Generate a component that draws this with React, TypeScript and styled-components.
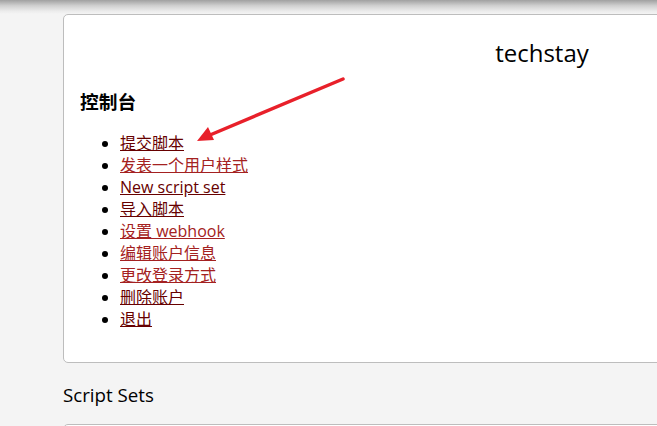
import React from "react";
import styled, { createGlobalStyle } from "styled-components";

const Global = createGlobalStyle`
  html, body { margin: 0; padding: 0; }
  body {
    background: #f4f4f4;
    font-family: "Open Sans", "Noto Sans CJK SC", sans-serif;
    color: #000;
    overflow: hidden;
    width: 657px;
    height: 426px;
  }
`;

const Page = styled.div`
  position: relative;
  width: 657px;
  height: 426px;
  overflow: hidden;
`;

const TopShade = styled.div`
  height: 14px;
  background: linear-gradient(to bottom, #a0a0a0 0%, #cfcfcf 40%, #ececec 80%, #f4f4f4 100%);
`;

const Main = styled.main`
  padding-left: 63px;
  width: 1100px;
`;

const Card = styled.section`
  width: 958px;
  background: #fff;
  border: 1px solid #bdbdbd;
  border-radius: 5px;
  box-sizing: border-box;
  padding: 21px 16px 32px 16px;
`;

const UserName = styled.h2`
  margin: 0;
  text-align: center;
  font-size: 24px;
  font-weight: 400;
  line-height: 33px;
`;

const SectionTitle = styled.h3`
  margin: 20px 0 0 0;
  font-size: 18.72px;
  font-weight: 700;
  line-height: 25px;
`;

const LinkList = styled.ul`
  margin: 18px 0 0 0;
  padding-left: 40px;
  list-style: disc;
`;

const Item = styled.li`
  font-size: 16px;
  line-height: 22px;
`;

const Link = styled.a<{ $visited?: boolean }>`
  color: ${(p) => (p.$visited ? "#a42121" : "#670000")};
  text-decoration: underline;
`;

const OuterTitle = styled.h3`
  margin: 19px 0 0 0;
  font-size: 18.72px;
  font-weight: 400;
  line-height: 25px;
`;

const NextCard = styled.div`
  margin-top: 17px;
  width: 958px;
  height: 40px;
  background: #fff;
  border: 1px solid #bdbdbd;
  border-radius: 5px;
`;

const Arrow = styled.svg`
  position: absolute;
  left: 0;
  top: 0;
  pointer-events: none;
`;

const links: { text: string; visited?: boolean }[] = [
  { text: "提交脚本" },
  { text: "发表一个用户样式", visited: true },
  { text: "New script set" },
  { text: "导入脚本" },
  { text: "设置 webhook", visited: true },
  { text: "编辑账户信息", visited: true },
  { text: "更改登录方式", visited: true },
  { text: "删除账户" },
  { text: "退出" },
];

export default function App() {
  return (
    <Page>
      <Global />
      <TopShade />
      <Main>
        <Card>
          <UserName>techstay</UserName>
          <SectionTitle>控制台</SectionTitle>
          <LinkList>
            {links.map((l) => (
              <Item key={l.text}>
                <Link href="#" $visited={l.visited}>
                  {l.text}
                </Link>
              </Item>
            ))}
          </LinkList>
        </Card>
        <OuterTitle>Script Sets</OuterTitle>
        <NextCard />
      </Main>
      <Arrow width="657" height="426" viewBox="0 0 657 426">
        <line x1="343" y1="79" x2="210" y2="135" stroke="#e8202a" strokeWidth="3.5" strokeLinecap="round" />
        <polygon points="197,141 208,127 214,140" fill="#e8202a" />
      </Arrow>
    </Page>
  );
}
